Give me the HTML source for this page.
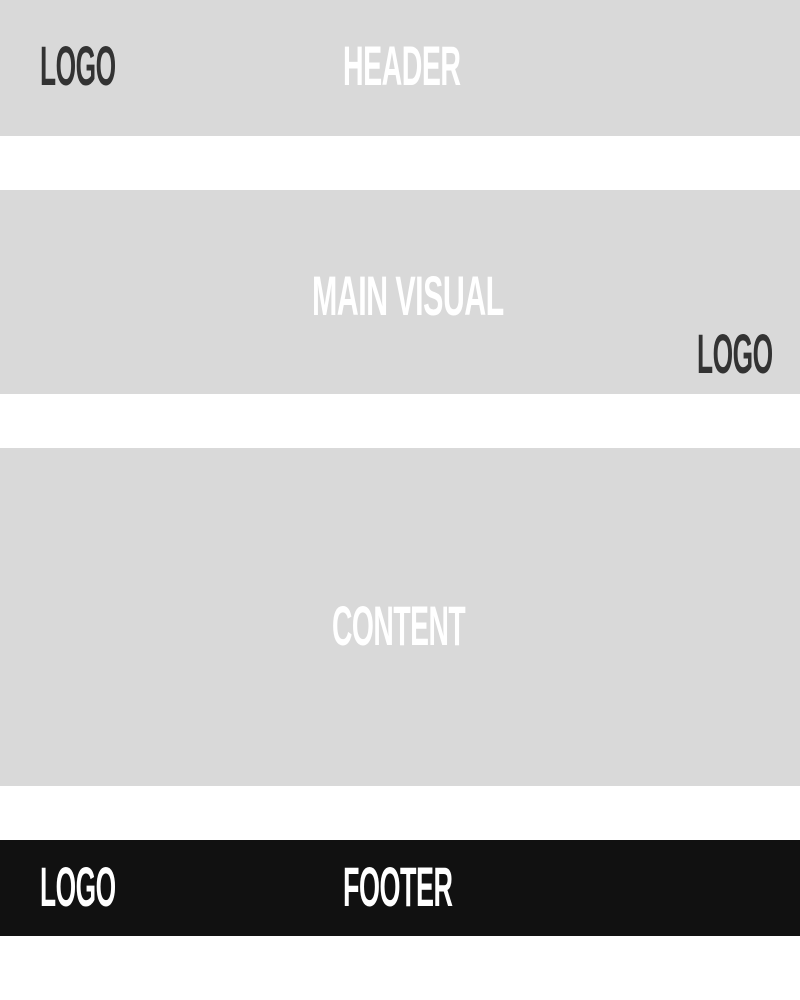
<!DOCTYPE html>
<html><head><meta charset="utf-8"><style>
*{margin:0;padding:0}
body{width:800px;height:1000px;background:#fff;position:relative;overflow:hidden;font-family:"Liberation Sans",sans-serif;font-weight:bold}
.b{position:absolute;left:0;width:800px}
.t{position:absolute;font-size:56px;line-height:56px;white-space:nowrap;transform-origin:0 0;letter-spacing:-1px}
.w{color:#fff}.d{color:#333}
</style></head><body>
<div class="b" style="top:0;height:136px;background:#d9d9d9"></div>
<div class="b" style="top:190px;height:204px;background:#d9d9d9"></div>
<div class="b" style="top:448px;height:338px;background:#d9d9d9"></div>
<div class="b" style="top:840px;height:96px;background:#111"></div>
<span class="t d" style="left:40px;top:38px;transform:scaleX(0.47)">LOGO</span>
<span class="t w" style="left:343px;top:38px;transform:scaleX(0.51)">HEADER</span>
<span class="t w" style="left:312px;top:268px;transform:scaleX(0.543)">MAIN VISUAL</span>
<span class="t d" style="left:697px;top:326px;transform:scaleX(0.47)">LOGO</span>
<span class="t w" style="left:332px;top:598px;transform:scaleX(0.505)">CONTENT</span>
<span class="t w" style="left:40px;top:859px;transform:scaleX(0.47)">LOGO</span>
<span class="t w" style="left:343px;top:859px;transform:scaleX(0.482)">FOOTER</span>
</body></html>
